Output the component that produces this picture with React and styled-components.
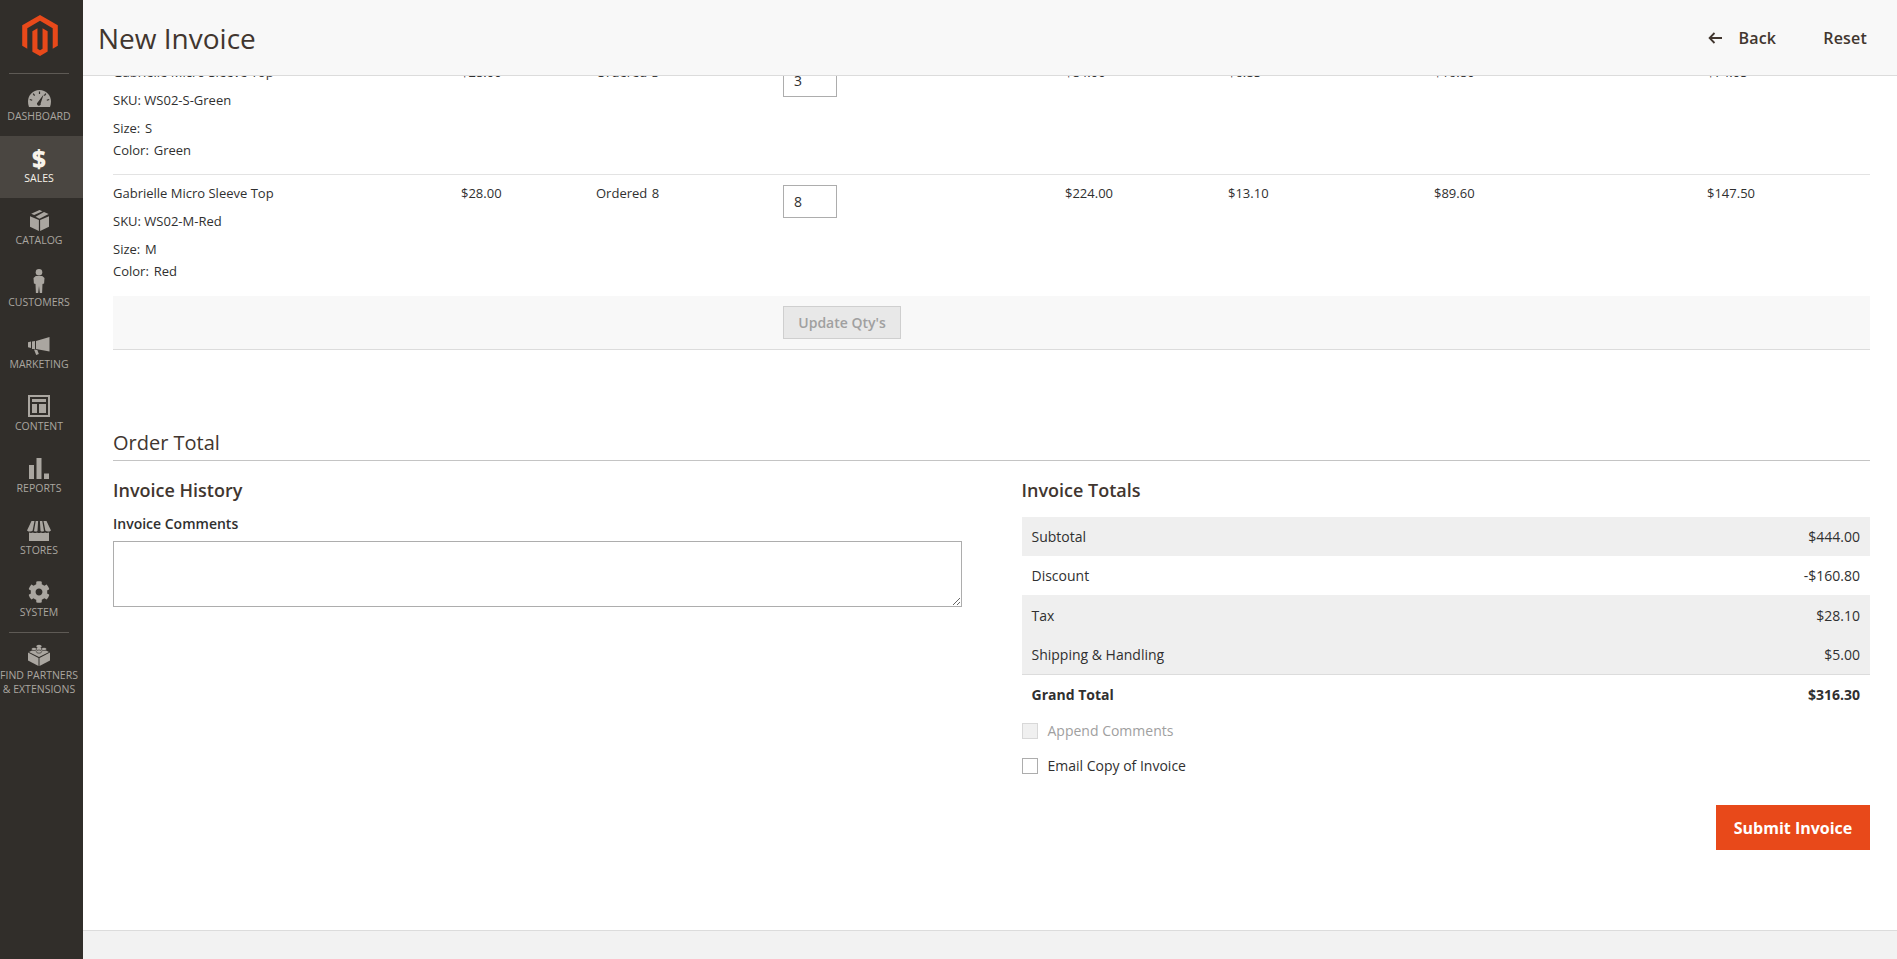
import React from 'react';
import styled, {createGlobalStyle} from 'styled-components';
import {FaCog} from 'react-icons/fa';

const GlobalStyle = createGlobalStyle`
  html, body {
    margin: 0;
    padding: 0;
    height: 100%;
    background: #ffffff;
    overflow: hidden;
  }
  body {
    font-family: "Open Sans", "Noto Sans", sans-serif;
    font-size: 13px;
    color: #303030;
  }
  * { box-sizing: border-box; }
`;

const Page = styled.div`
  display: flex;
  height: 959px;
  width: 1897px;
`;

const Sidebar = styled.nav`
  width: 83px;
  flex: none;
  background: #312e2a;
  display: flex;
  flex-direction: column;
  align-items: stretch;
`;

const LogoLink = styled.a`
  height: 73px;
  display: flex;
  justify-content: center;
  padding-top: 15px;
  padding-right: 4px;
`;

const SideRule = styled.div`
  height: 1px;
  margin: 0 14px 0 9px;
  background: #5e5a55;
`;

const MenuList = styled.div`
  display: flex;
  flex-direction: column;
`;

const MenuItem = styled.a`
  height: 62px;
  display: flex;
  flex-direction: column;
  align-items: center;
  padding-right: 5px;
  background: ${p => (p.$active ? '#4a4641' : 'transparent')};
  color: ${p => (p.$active ? '#f7f3eb' : '#aaa6a0')};
  font-size: 10.5px;
  line-height: 14px;
  text-transform: uppercase;
  white-space: nowrap;
`;

const IconSlot = styled.span`
  height: 35px;
  flex: none;
  display: flex;
  align-items: flex-end;
  justify-content: center;
  padding-bottom: 2px;
  svg { display: block; }
`;

const DollarIcon = styled.span`
  height: 35px;
  flex: none;
  padding-top: 11px;
  font-size: 24px;
  font-weight: 800;
  line-height: 24px;
`;

const Partners = styled(MenuItem)`
  height: auto;
  text-align: center;
`;

const Main = styled.div`
  flex: 1;
  min-width: 0;
  display: flex;
  flex-direction: column;
`;

const Header = styled.header`
  height: 76px;
  flex: none;
  background: #f8f8f8;
  border-bottom: 1px solid #dcdcdc;
  display: flex;
  align-items: center;
  justify-content: space-between;
  padding: 0 30px 0 15px;
  position: relative;
  z-index: 2;
`;

const PageTitle = styled.h1`
  margin: 0;
  font-size: 28px;
  font-weight: 400;
  color: #41362f;
`;

const HeaderActions = styled.div`
  display: flex;
  align-items: center;
  gap: 47px;
`;

const ActionLink = styled.a`
  display: flex;
  align-items: center;
  gap: 15px;
  font-size: 16px;
  font-weight: 600;
  letter-spacing: 0.2px;
  color: #41362f;
`;

const Content = styled.main`
  flex: 1;
  min-height: 0;
  overflow: hidden;
  padding: 0 27px 0 30px;
`;

const ItemsTable = styled.div`
  margin-top: -22px;
`;

const ItemRow = styled.div`
  display: grid;
  grid-template-columns: 348px 135px 187px 282px 163px 206px 273px 1fr;
  height: 121px;
  padding-top: 9px;
  border-bottom: ${p => (p.$last ? 'none' : '1px solid #e3e3e3')};
`;

const Cell = styled.div`
  line-height: 18px;
  word-spacing: 1px;
`;

const ProductName = styled.div`
  line-height: 18px;
  margin-bottom: 10px;
  word-spacing: 0;
`;

const Sku = styled.div`
  line-height: 18px;
  margin-bottom: 10px;
  word-spacing: 0;
`;

const Option = styled.div`
  line-height: 18px;
  margin-bottom: 4px;
  word-spacing: 1.5px;
`;

const QtyInput = styled.input`
  display: block;
  width: 54px;
  height: 33px;
  margin-top: 1px;
  border: 1px solid #adadad;
  padding: 0 10px;
  font: inherit;
  font-size: 14px;
  color: #303030;
  background: #fff;
`;

const UpdateBar = styled.div`
  height: 54px;
  display: flex;
  align-items: center;
  padding-left: 670px;
  background: #f8f8f8;
  border-bottom: 1px solid #dcdcdc;
`;

const UpdateButton = styled.button`
  width: 118px;
  height: 33px;
  border: 1px solid #cfcfcf;
  background: #e8e8e8;
  color: #a0a0a0;
  font-family: inherit;
  font-size: 14px;
  font-weight: 600;
`;

const SectionTitle = styled.h2`
  margin: 73px 0 0;
  height: 36px;
  padding-top: 1px;
  font-size: 20px;
  font-weight: 400;
  line-height: 37px;
  color: #41362f;
  border-bottom: 1px solid #c4c4c4;
  box-sizing: content-box;
`;

const Columns = styled.div`
  display: grid;
  grid-template-columns: 849px 1fr;
  gap: 59.5px;
  padding-top: 17px;
`;

const Column = styled.section`
  display: flex;
  flex-direction: column;
`;

const ColumnTitle = styled.h3`
  margin: 0;
  font-size: 18px;
  font-weight: 600;
  line-height: 25px;
  color: #41362f;
`;

const FieldLabel = styled.label`
  display: block;
  margin-top: 11px;
  font-size: 14px;
  font-weight: 600;
  line-height: 20px;
  color: #303030;
`;

const CommentBox = styled.textarea`
  display: block;
  width: 849px;
  height: 66px;
  margin-top: 7px;
  border: 1px solid #adadad;
  background: #fff;
`;

const TotalsList = styled.div`
  margin-top: 14px;
  font-size: 14px;
`;

const TotalRow = styled.div`
  display: flex;
  justify-content: space-between;
  align-items: center;
  height: ${p => p.$height || 39}px;
  padding: ${p => (p.$strong ? '1px' : '0')} 10px 0;
  background: ${p => (p.$shaded ? '#efefef' : 'transparent')};
  font-weight: ${p => (p.$strong ? 700 : 400)};
  border-bottom: ${p => (p.$ruled ? '1px solid #dcdcdc' : 'none')};
`;

const CheckRow = styled.label`
  display: flex;
  align-items: center;
  gap: 10px;
  height: 35px;
  font-size: 14px;
  color: ${p => (p.$disabled ? '#a0a0a0' : '#303030')};
`;

const CheckBox = styled.span`
  width: 16px;
  height: 16px;
  flex: none;
  border: 1px solid ${p => (p.$disabled ? '#d8d8d8' : '#adadad')};
  background: ${p => (p.$disabled ? '#f0f0f0' : '#fff')};
`;

const SubmitRow = styled.div`
  display: flex;
  justify-content: flex-end;
  margin-top: 22px;
`;

const SubmitButton = styled.button`
  width: 154px;
  height: 45px;
  border: none;
  background: #e8491a;
  color: #ffffff;
  font-family: inherit;
  font-size: 16px;
  font-weight: 700;
`;

const Footer = styled.footer`
  height: 29px;
  flex: none;
  background: #f2f2f2;
  border-top: 1px solid #dcdcdc;
`;

const iconColor = '#aaa6a0';

function Logo(){
  return (
    <svg width="36" height="41" viewBox="0 0 43.4 50" fill="#e8491a">
      <path d="M21.7 0 0 12.5v25l6.2 3.6v-25l15.5-9 15.5 9v25l6.2-3.6v-25z"/>
      <path d="m24.8 41.1-3.1 1.8-3.1-1.8v-25l-6.2 3.6v25l9.3 5.3 9.3-5.4V19.7l-6.2-3.6z"/>
    </svg>
  );
}

function DashboardIcon(){
  return (
    <svg width="23" height="17" viewBox="0 0 23 17">
      <path fill={iconColor} d="M11.5 0C5 0 0 5.2 0 11.6c0 2 .3 3.7 1 5.4h21c.7-1.7 1-3.4 1-5.4C23 5.2 18 0 11.5 0z"/>
      <path stroke="#312e2a" strokeWidth="1.2" d="M11.5 1.5v2.6M5.2 3.6l1.4 2.1M1.8 9.5l2.4.8M17.8 3.6l-1.4 2.1M21.2 9.5l-2.4.8"/>
      <path fill="#312e2a" d="m15.6 4.4-2.9 8.8a1.9 1.9 0 1 1-2.9-1z"/>
    </svg>
  );
}

function CatalogIcon(){
  return (
    <svg width="19" height="21" viewBox="0 0 19 21" fill={iconColor}>
      <path d="M0 6.2 8.9 10v11L0 16.8z"/>
      <path d="M19 6.2 10.1 10v11l8.9-4.2z"/>
      <path d="m9.5 0 3 1.3L4.2 5l-3-1.3z"/>
      <path d="m14 2 4.6 2-9.1 4.7-3.9-1.900z"/>
    </svg>
  );
}

function CustomersIcon(){
  return (
    <svg width="12" height="24" viewBox="0 0 11 24" fill={iconColor}>
      <circle cx="5.5" cy="3.3" r="3.3"/>
      <path d="M2.3 7h6.4L11 9l-.4 5.500-1.600.6-.4 8.900H6.300l-.8-7-.8 7H2.400L2 15.100l-1.600-.6L0 9z"/>
    </svg>
  );
}

function MarketingIcon(){
  return (
    <svg width="22" height="18" viewBox="0 0 22 18" fill={iconColor}>
      <path d="M21.5 0v14.500L8 12V4z"/>
      <path d="M0 5.200 3 4.500v6.500L0 10.200z"/>
      <path d="M4 4.400 7 4v8H4z"/>
      <path d="m6 12.400 3.300.6 1.500 3.900-2.600 1.100z"/>
    </svg>
  );
}

function ContentIcon(){
  return (
    <svg width="22" height="22" viewBox="0 0 22 22" fill={iconColor}>
      <path fillRule="evenodd" d="M0 0h22v22H0zm2 2v18h18V2z"/>
      <path d="M4 4h14v3H4zM4 9h5v9H4zM11 9h7v9h-7z"/>
    </svg>
  );
}

function ReportsIcon(){
  return (
    <svg width="20" height="21" viewBox="0 0 20 21" fill={iconColor}>
      <path d="M0 7h5v14H0zM7.500 0h5v21h-5zM15 15.500h5V21h-5z"/>
    </svg>
  );
}

function StoresIcon(){
  return (
    <svg width="24" height="20" viewBox="0 0 24 20" fill={iconColor}>
      <path d="M2 11.500c1 .5 3 .5 4 0 1 .7 3 .7 4 0 1 .7 3 .7 4 0 1 .7 3 .7 4 0 1 .5 2.500.5 4 0V20H2z"/>
      <path d="M4.500 0h3L5.600 9.800C4 11 1.500 10.800 0 9.400zM8.700 0h2.400l-.6 10c-1 .8-2.600.8-3.500 0zM12.900 0h2.400l1.700 10c-1 .8-2.600.8-3.500 0zM16.500 0h3L24 9.400c-1.500 1.400-4 1.600-5.600.4z"/>
    </svg>
  );
}

function PartnersIcon(){
  return (
    <svg width="22" height="22" viewBox="0 0 22 22" fill={iconColor}>
      <path d="M0 8.500 10.500 14v8L0 16.500z"/>
      <path d="M22 8.500 11.500 14v8L22 16.500z"/>
      <path d="M11 3 21 8 11 13 1 8z"/>
      <ellipse cx="11" cy="2.300" rx="2.700" ry="1.600"/>
      <ellipse cx="6" cy="5" rx="2.700" ry="1.600" stroke="#312e2a" strokeWidth=".6"/>
      <ellipse cx="16" cy="5" rx="2.700" ry="1.600" stroke="#312e2a" strokeWidth=".6"/>
      <ellipse cx="11" cy="7.600" rx="2.700" ry="1.600" stroke="#312e2a" strokeWidth=".6"/>
    </svg>
  );
}

function BackArrow(){
  return (
    <svg width="15" height="12" viewBox="0 0 15 12" fill="none" stroke="#41362f" strokeWidth="1.8">
      <path d="M14 6H2M6.500 1 1.600 6l4.900 5"/>
    </svg>
  );
}

const menu = [
  {label: 'Dashboard', icon: <DashboardIcon />},
  {label: 'Sales', active: true},
  {label: 'Catalog', icon: <CatalogIcon />},
  {label: 'Customers', icon: <CustomersIcon />},
  {label: 'Marketing', icon: <MarketingIcon />},
  {label: 'Content', icon: <ContentIcon />},
  {label: 'Reports', icon: <ReportsIcon />},
  {label: 'Stores', icon: <StoresIcon />},
  {label: 'System', icon: <FaCog size={22} color={iconColor} />},
];

const rows = [
  {sku: 'WS02-S-Green', size: 'S', color: 'Green', price: '$28.00', ordered: 3, subtotal: '$84.00', tax: '$6.85', discount: '$16.80', total: '$74.05'},
  {sku: 'WS02-M-Red', size: 'M', color: 'Red', price: '$28.00', ordered: 8, subtotal: '$224.00', tax: '$13.10', discount: '$89.60', total: '$147.50'},
];

const totals = [
  {label: 'Subtotal', value: '$444.00', shaded: true},
  {label: 'Discount', value: '-$160.80'},
  {label: 'Tax', value: '$28.10', shaded: true, height: 40},
  {label: 'Shipping & Handling', value: '$5.00', shaded: true, ruled: true, height: 40},
  {label: 'Grand Total', value: '$316.30', strong: true, height: 38},
];

export default function App(){
  return (
    <Page>
      <GlobalStyle />
      <Sidebar>
        <LogoLink><Logo /></LogoLink>
        <SideRule />
        <MenuList>
          {menu.map(item => (
            <MenuItem key={item.label} $active={item.active}>
              {item.active ? <DollarIcon>$</DollarIcon> : <IconSlot>{item.icon}</IconSlot>}
              {item.label}
            </MenuItem>
          ))}
        </MenuList>
        <SideRule />
        <Partners>
          <IconSlot><PartnersIcon /></IconSlot>
          Find Partners<br />&amp; Extensions
        </Partners>
      </Sidebar>
      <Main>
        <Header>
          <PageTitle>New Invoice</PageTitle>
          <HeaderActions>
            <ActionLink><BackArrow />Back</ActionLink>
            <ActionLink>Reset</ActionLink>
          </HeaderActions>
        </Header>
        <Content>
          <ItemsTable>
            {rows.map((row, i) => (
              <ItemRow key={row.sku} $last={i === rows.length - 1}>
                <Cell>
                  <ProductName>Gabrielle Micro Sleeve Top</ProductName>
                  <Sku>SKU: {row.sku}</Sku>
                  <Option>Size: {row.size}</Option>
                  <Option>Color: {row.color}</Option>
                </Cell>
                <Cell>{row.price}</Cell>
                <Cell>Ordered {row.ordered}</Cell>
                <Cell><QtyInput defaultValue={row.ordered} /></Cell>
                <Cell>{row.subtotal}</Cell>
                <Cell>{row.tax}</Cell>
                <Cell>{row.discount}</Cell>
                <Cell>{row.total}</Cell>
              </ItemRow>
            ))}
          </ItemsTable>
          <UpdateBar><UpdateButton disabled>Update Qty's</UpdateButton></UpdateBar>
          <SectionTitle>Order Total</SectionTitle>
          <Columns>
            <Column>
              <ColumnTitle>Invoice History</ColumnTitle>
              <FieldLabel>Invoice Comments</FieldLabel>
              <CommentBox />
            </Column>
            <Column>
              <ColumnTitle>Invoice Totals</ColumnTitle>
              <TotalsList>
                {totals.map(t => (
                  <TotalRow key={t.label} $shaded={t.shaded} $strong={t.strong} $ruled={t.ruled} $height={t.height}>
                    <span>{t.label}</span>
                    <span>{t.value}</span>
                  </TotalRow>
                ))}
              </TotalsList>
              <CheckRow $disabled><CheckBox $disabled />Append Comments</CheckRow>
              <CheckRow><CheckBox />Email Copy of Invoice</CheckRow>
              <SubmitRow><SubmitButton>Submit Invoice</SubmitButton></SubmitRow>
            </Column>
          </Columns>
        </Content>
        <Footer />
      </Main>
    </Page>
  );
}
